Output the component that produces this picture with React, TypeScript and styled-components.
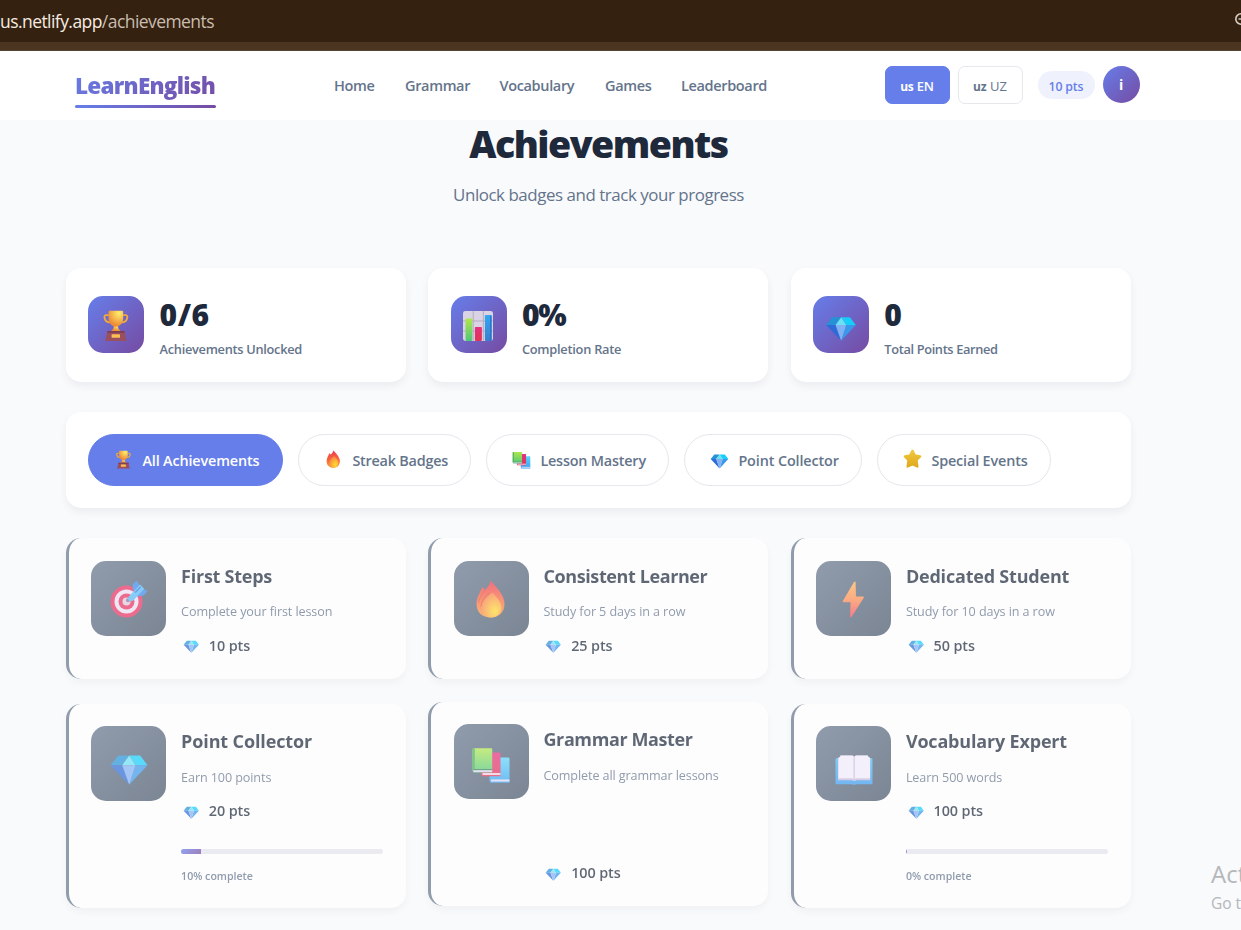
import React from "react";
import styled, { createGlobalStyle, css } from "styled-components";

const GlobalStyle = createGlobalStyle`
  * { box-sizing: border-box; }
  body {
    margin: 0;
    background: #f9fafc;
    font-family: "Segoe UI", "Open Sans", "Noto Sans", sans-serif;
    overflow: hidden;
  }
  h1, h3, p { margin: 0; }
  button { font-family: inherit; }
`;

const brand = "linear-gradient(135deg, #667eea, #764ba2)";

type Track = { $track?: number };
const tracking = css<Track>`
  letter-spacing: ${(p) => p.$track ?? 0}px;
  white-space: nowrap;
`;

const Page = styled.div`
  position: relative;
  width: 1241px;
  height: 930px;
  overflow: hidden;
  background: #f9fafc;
`;

const BrowserBar = styled.div`
  height: 51px;
  display: flex;
  align-items: flex-start;
  justify-content: space-between;
  background: #34210f;
  border-bottom: 1px solid #544535;
  box-shadow: inset 0 -8px 0 #4b3521;
`;

const Url = styled.div<Track>`
  ${tracking}
  font-size: 17.5px;
  line-height: 43px;
  color: #f6ece2;
  span { color: #c9bdb0; }
`;

const ZoomGlyph = styled.svg`
  width: 7px;
  height: 16px;
  margin-top: 11px;
`;

const Header = styled.header`
  height: 69px;
  padding: 0 101px 0 75px;
  display: flex;
  align-items: center;
  background: #fff;
`;

const Logo = styled.div<Track>`
  ${tracking}
  position: relative;
  width: 141px;
  height: 45px;
  font-size: 22.5px;
  font-weight: 800;
  line-height: 45px;
  color: transparent;
  background: ${brand};
  background-clip: text;
  -webkit-background-clip: text;
  &::after {
    content: "";
    position: absolute;
    left: 0;
    right: 0;
    bottom: 0;
    height: 3px;
    border-radius: 2px;
    background: ${brand};
  }
`;

const Nav = styled.nav`
  display: flex;
  gap: 30px;
  margin-left: 118px;
`;

const NavLink = styled.a<Track & { $width: number }>`
  ${tracking}
  width: ${(p) => p.$width}px;
  font-size: 14.5px;
  font-weight: 600;
  line-height: 22px;
  color: #64748b;
`;

const HeaderTools = styled.div`
  display: flex;
  align-items: center;
  margin: -2px 0 0 auto;
`;

const LangButton = styled.button<Track & { $active?: boolean }>`
  ${tracking}
  width: 65px;
  height: 38px;
  margin-right: 8px;
  padding: 3px 0 0;
  border-radius: 7px;
  border: 1px solid ${(p) => (p.$active ? "#667eea" : "#e5e7eb")};
  background: ${(p) => (p.$active ? "#667eea" : "#fff")};
  color: ${(p) => (p.$active ? "#fff" : "#64748b")};
  font-size: 13px;
  font-weight: ${(p) => (p.$active ? 600 : 500)};
  b { font-size: 12px; font-weight: 700; }
`;

const PointsPill = styled.div<Track>`
  ${tracking}
  width: 57px;
  height: 28px;
  margin: 0 8px 0 7px;
  border-radius: 14px;
  background: #eff2fd;
  color: #667eea;
  font-size: 12.3px;
  font-weight: 600;
  line-height: 31px;
  text-align: center;
`;

const Avatar = styled.div`
  width: 37.5px;
  height: 37.5px;
  border-radius: 50%;
  background: ${brand};
  color: #fff;
  font-size: 14px;
  font-weight: 700;
  line-height: 38px;
  text-align: center;
`;

const Main = styled.main`
  width: 1065px;
  margin-left: 66px;
`;

const Intro = styled.section`
  height: 148px;
  text-align: center;
`;

const PageTitle = styled.h1<Track>`
  ${tracking}
  font-size: 37.5px;
  font-weight: 800;
  line-height: 48px;
  color: #1e293b;
`;

const Subtitle = styled.p<Track>`
  ${tracking}
  margin-top: 14px;
  font-size: 16.9px;
  line-height: 26px;
  color: #64748b;
`;

const Grid = styled.section`
  display: grid;
  grid-template-columns: repeat(3, 340px);
  column-gap: 22.4px;
`;

const panel = css`
  border-radius: 15px;
  background: #fff;
  box-shadow: 0 4px 8px rgba(15, 23, 42, 0.06);
`;

const StatCard = styled.article`
  ${panel}
  height: 114px;
  padding: 28.4px 22px 0 22.2px;
  display: flex;
  gap: 15.2px;
`;

const IconTile = styled.div<{ $size: number; $muted?: boolean }>`
  flex: none;
  width: ${(p) => p.$size}px;
  height: ${(p) => p.$size}px;
  display: flex;
  align-items: center;
  justify-content: center;
  border-radius: 15px;
  background: ${(p) => (p.$muted ? "linear-gradient(135deg, #64748b, #475569)" : brand)};
`;

const StatValue = styled.div<Track>`
  ${tracking}
  font-size: 30px;
  font-weight: 800;
  line-height: 38px;
  color: #1e293b;
`;

const StatLabel = styled.div<Track>`
  ${tracking}
  margin-top: 4.600px;
  font-size: 12.8px;
  font-weight: 600;
  line-height: 20px;
  color: #64748b;
`;

const Filters = styled.section`
  ${panel}
  height: 96px;
  margin: 30px 0 30.3px;
  padding: 22px;
  display: flex;
  gap: 15px;
`;

const FilterButton = styled.button<Track & { $active?: boolean; $width: number }>`
  ${tracking}
  width: ${(p) => p.$width}px;
  height: 52px;
  padding: 1px 0 0 24.8px;
  display: flex;
  align-items: center;
  gap: 9.6px;
  border-radius: 26px;
  border: 1px solid ${(p) => (p.$active ? "#667eea" : "#e6e7ec")};
  background: ${(p) => (p.$active ? "#667eea" : "#fff")};
  color: ${(p) => (p.$active ? "#fff" : "#64748b")};
  font-size: 14.4px;
  font-weight: 600;
  svg { margin-top: -4px; }
`;

const BadgeCard = styled.article<{ $height: number; $raised?: boolean }>`
  ${panel}
  height: ${(p) => p.$height}px;
  margin-top: ${(p) => (p.$raised ? -2 : 0)}px;
  margin-bottom: 24.7px;
  padding: 22.5px 23px 22.5px 22.3px;
  display: flex;
  gap: 14.8px;
  border-left: 3px solid #64748b;
  opacity: 0.7;
`;

const BadgeBody = styled.div`
  flex: 1;
  display: flex;
  flex-direction: column;
`;

const BadgeTitle = styled.h3<Track>`
  ${tracking}
  font-size: 18px;
  font-weight: 700;
  line-height: 30px;
  color: #1e293b;
`;

const BadgeText = styled.p<Track>`
  ${tracking}
  margin-top: 11.6px;
  font-size: 12.6px;
  line-height: 20px;
  color: #64748b;
`;

const Reward = styled.div<Track & { $bottom?: boolean }>`
  ${tracking}
  margin-top: ${(p) => (p.$bottom ? "auto" : "11.2px")};
  margin-bottom: ${(p) => (p.$bottom ? "-2px" : "0")};
  height: 24px;
  padding-left: 2px;
  display: flex;
  align-items: center;
  gap: 9.2px;
  font-size: 14.4px;
  font-weight: 600;
  line-height: 24px;
  color: #1e293b;
  svg { margin-top: -2px; }
`;

const ProgressTrack = styled.div`
  flex: none;
  height: 5px;
  margin-top: 26px;
  border-radius: 3px;
  background: #e5e5eb;
  overflow: hidden;
`;

const ProgressFill = styled.div`
  height: 100%;
  background: ${brand};
`;

const ProgressLabel = styled.div<Track>`
  ${tracking}
  margin-top: 13px;
  font-size: 10.6px;
  font-weight: 600;
  line-height: 18px;
  color: #64748b;
`;

const Watermark = styled.aside`
  position: absolute;
  left: 1211px;
  top: 856.500px;
  white-space: nowrap;
  color: #b5b7ba;
  font-size: 15.5px;
  line-height: 24px;
  strong { display: block; font-weight: 400; font-size: 24px; line-height: 34px; }
`;

const EmojiSvg = styled.svg<{ $size: number }>`
  flex: none;
  width: ${(p) => p.$size}px;
  height: ${(p) => p.$size}px;
  overflow: visible;
`;

type EmojiName = "trophy" | "chart" | "gem" | "flame" | "books" | "star" | "target" | "bolt" | "openBook";

const art: Record<EmojiName, React.ReactNode> = {
  trophy: (
    <>
      <path d="M11 9H7.500a2 2 0 0 0-2 2.300c.5 4.200 3 6.500 7 6.700M29 9h3.200a2 2 0 0 1 2 2.300c-.5 4.200-3 6.500-7 6.700" fill="none" stroke="#f0a93c" strokeWidth="2.300" />
      <path d="M17.500 21h4.800l.6 4.500 3 3.500H13.800l3-3.500z" fill="url(#gCup)" />
      <path d="M10.700 4.800q0-1.300 1.300-1.300h15.700q1.300 0 1.300 1.300v8.700c0 5-4.300 10-9.200 10s-9.100-5-9.100-10z" fill="url(#gCup)" />
      <path d="M9.500 28.800h21l2.600 12.300H6.500z" fill="#9a4f5e" />
      <path d="M9.500 28.800h21l.5 2.200H9z" fill="#7c3d50" />
      <rect x="14.500" y="32.800" width="10.500" height="4.400" rx=".6" fill="#f9bf54" />
    </>
  ),
  chart: (
    <>
      <rect x="0" y="3.600" width="37.500" height="37.500" rx="3" fill="#d9d3e3" />
      <path d="M12.800 3.600v37.500M25.500 3.600v37.500M0 16.200h37.500M0 28.800h37.500" stroke="#b3a9c0" strokeWidth="1.200" />
      <rect x="3.200" y="13.200" width="8.400" height="27.900" rx="1" fill="url(#gGreen)" />
      <rect x="14.900" y="23.600" width="8.700" height="17.500" rx="1" fill="url(#gRed)" />
      <rect x="27.400" y="8.600" width="8.400" height="32.500" rx="1" fill="url(#gBlue)" />
      <path d="M34.800 9.600v31.500" stroke="#2a70c0" strokeWidth="1.600" />
    </>
  ),
  gem: (
    <>
      <path d="M9.200 11.500h11L13.200 21.200H1.500z" fill="#2592d6" />
      <path d="M20.200 11.500h11l7.300 9.700h-12z" fill="#17cdfa" />
      <path d="M20.200 11.500l6.300 9.700H13.200z" fill="#6ce0f5" />
      <path d="M1.500 21.200h11.700l7 19.600z" fill="#2f6bd6" />
      <path d="M38.500 21.200h-12l-6.300 19.600z" fill="#3a98ea" />
      <path d="M13.200 21.200h13.300l-6.300 19.600z" fill="#7fb1f4" />
    </>
  ),
  flame: (
    <>
      <path d="M20.200 2.500c1.800 3.600 4.800 5.800 7.500 9.400 3.300 4.300 5.800 8.700 5.800 14.100 0 8-5.500 13.500-13.500 13.500-8.600 0-14.500-5.300-14.500-13.300 0-6.700 3-10.200 5.700-17 1.300.6 2.300 1.500 2.900 2.700 2.400-2.300 4.800-5.500 6.100-9.400z" fill="url(#gFlame)" />
      <path d="M13.800 12c-3.300 4.600-6 8-6.200 13M18 15c-4.600 4-7.800 8-8 14" fill="none" stroke="#d94a30" strokeWidth="1.200" opacity=".6" />
      <path d="M21.500 14.500C15 19 10.500 24.500 10.500 30.500c0 5 4 9 9.500 9 6 0 10.300-4.500 10.300-10.500 0-5.500-4.800-9.500-8.800-14.500z" fill="url(#gFlameIn)" />
    </>
  ),
  books: (
    <>
      <path d="M20.500 15.500h16.700q1.300 0 1.300 1.300v24H20q-1.500 0-1.500-2v-21z" fill="url(#gBlueBook)" />
      <path d="M20 37.500h18.500v2H20z" fill="#e6d8f5" />
      <path d="M12 10.500h16.300q1.200 0 1.200 1.200v22.500H11.700q-1.500 0-1.500-2v-19z" fill="url(#gRed)" />
      <path d="M11.500 31h18v2h-18z" fill="#f3cfe2" />
      <path d="M1.500 7.700q0-1.500 1.500-1.500h17q1.200 0 1.200 1.200v23.100H3q-1.500 0-1.500-2z" fill="url(#gGreen)" />
      <path d="M1.500 7.700q0-1.500 1.500-1.500h.8v21.500H1.500z" fill="#4aae5c" />
      <path d="M2.500 27.700h18.700" stroke="#386a57" strokeWidth="1" />
      <path d="M2.500 28.200h18.700v1.900H2.500z" fill="#ddd1ee" />
    </>
  ),
  star: (
    <path d="M17.800 2.600q2.200-3.600 4.400 0l4.600 9.200 9.700 1.600q3.900.8 1.300 3.800l-6.800 7.200 1.600 12q.4 4-3.100 2.600L20 34.800 10.500 39q-3.600 1.400-3.100-2.600l1.600-12-6.800-7.200q-2.600-3 1.300-3.800l9.700-1.600z" fill="url(#gStar)" />
  ),
  target: (
    <>
      <circle cx="17.500" cy="23.500" r="16" fill="#e8315f" />
      <circle cx="17.500" cy="23.500" r="12" fill="#ebdff2" />
      <circle cx="17.500" cy="23.500" r="8" fill="#e8315f" />
      <circle cx="17.500" cy="23.500" r="4" fill="#ddc9dc" />
      <circle cx="19" cy="22.200" r="2" fill="#8d7194" />
      <path d="M23.800 11.500l-.2-5 4-4 3.600 5.500-4.500 9zM27.500 18.500l4.500-8.700 6.700 3.400-4.700 4.500z" fill="#3c86e8" />
      <path d="M19.800 18.500L31 6.500l4.200 4.200L24.500 22.300q-2.600 1.500-4.400.4t-.3-4.200z" fill="#55b9f5" />
      <path d="M26.200 14.500l5.500-5.800" stroke="#2f78dc" strokeWidth="1.300" />
    </>
  ),
  bolt: (
    <path d="M20 4q1.200-1.300 1.600.2l.4 14.300h7.200q1 .2.600 1.200L17.600 38.800q-1 1.300-1.500 0l.4-14.600H9.300q-1-.2-.5-1.200z" fill="url(#gBolt)" />
  ),
  openBook: (
    <>
      <path d="M1.500 15.500q0-1.500 1.500-1.500h34q1.500 0 1.500 1.500v23.700q0 1-1 1H22.300q-2 1.200-4.300 0H2.500q-1 0-1-1z" fill="url(#gCover)" />
      <path d="M4 14q2-1 2.500-2.500H18q1.500 0 2 1.500.6-1.500 2.200-1.500h11.500q.5 1.500 2.600 2.500v22.300H22.500q-2.300 1.500-4.700 0H4z" fill="#c8bbdc" />
      <path d="M4.500 14q2-1 2.300-2.500H18q2 0 2 2V35q-1.500-.8-3-.8H4.500zM20.300 13.500q0-2 2-2h11.400q.5 1.500 2.300 2.500v20.200H23q-1.500 0-2.700.8z" fill="#f1ebfb" />
      <path d="M20.100 13v22" stroke="#cbbfe0" strokeWidth="1.300" />
    </>
  ),
};

const Emoji = ({ name, size }: { name: EmojiName; size: number }) => (
  <EmojiSvg $size={size} viewBox="0 0 40 40" aria-hidden="true">
    {art[name]}
  </EmojiSvg>
);

const HiddenDefs = styled.svg`
  position: absolute;
  width: 0;
  height: 0;
`;

const gradients: [string, string, string, string?][] = [
  ["gGreen", "#b0e64c", "#4fc878"],
  ["gRed", "#e4307f", "#e23553"],
  ["gBlue", "#32a8f4", "#3a7fd0"],
  ["gBlueBook", "#5ed5fa", "#38a0f0"],
  ["gBolt", "#ffb254", "#f4475a", "#fb8b50"],
  ["gStar", "#f0c93e", "#e0a81c"],
  ["gFlame", "#f0334c", "#fb9a3c", "#f8673e"],
  ["gCover", "#4ab8ee", "#3a9af0"],
];

const Gradients = () => (
  <HiddenDefs>
    <defs>
      {gradients.map(([id, from, to, mid]) => (
        <linearGradient key={id} id={id} x1="0" y1="0" x2="0" y2="1">
          <stop stopColor={from} />
          {mid && <stop offset=".5" stopColor={mid} />}
          <stop offset="1" stopColor={to} />
        </linearGradient>
      ))}
      <radialGradient id="gCup" cx=".7" cy=".15" r=".8">
        <stop stopColor="#fff06a" />
        <stop offset="1" stopColor="#ee8a35" />
      </radialGradient>
      <radialGradient id="gFlameIn" cx=".68" cy=".75" r=".75">
        <stop stopColor="#ffdc30" />
        <stop offset=".5" stopColor="#fdae3a" />
        <stop offset="1" stopColor="#f77d48" />
      </radialGradient>
    </defs>
  </HiddenDefs>
);

const links = [
  { label: "Home", width: 41 },
  { label: "Grammar", width: 64.5 },
  { label: "Vocabulary", width: 75.5 },
  { label: "Games", width: 46 },
  { label: "Leaderboard", width: 86 },
];

const stats: { icon: EmojiName; value: string; label: string; valueTrack: number; labelTrack: number }[] = [
  { icon: "trophy", value: "0/6", label: "Achievements Unlocked", valueTrack: 0.6, labelTrack: -0.29 },
  { icon: "chart", value: "0%", label: "Completion Rate", valueTrack: -1.2, labelTrack: -0.25 },
  { icon: "gem", value: "0", label: "Total Points Earned", valueTrack: 0, labelTrack: -0.35 },
];

const filters: { icon: EmojiName; label: string; width: number; track: number; active?: boolean }[] = [
  { icon: "trophy", label: "All Achievements", width: 195, track: -0.14, active: true },
  { icon: "flame", label: "Streak Badges", width: 173, track: -0.22 },
  { icon: "books", label: "Lesson Mastery", width: 183, track: -0.2 },
  { icon: "gem", label: "Point Collector", width: 178, track: -0.12 },
  { icon: "star", label: "Special Events", width: 174, track: -0.15 },
];

type Badge = {
  icon: EmojiName;
  title: string;
  titleTrack: number;
  text: string;
  points: number;
  height: number;
  progress?: number;
  raised?: boolean;
};

const badges: Badge[] = [
  { icon: "target", title: "First Steps", titleTrack: -0.25, text: "Complete your first lesson", points: 10, height: 140.6 },
  { icon: "flame", title: "Consistent Learner", titleTrack: -0.4, text: "Study for 5 days in a row", points: 25, height: 140.6 },
  { icon: "bolt", title: "Dedicated Student", titleTrack: -0.2, text: "Study for 10 days in a row", points: 50, height: 140.6 },
  { icon: "gem", title: "Point Collector", titleTrack: -0.13, text: "Earn 100 points", points: 20, height: 204, progress: 10 },
  { icon: "books", title: "Grammar Master", titleTrack: -0.4, text: "Complete all grammar lessons", points: 100, height: 204, raised: true },
  { icon: "openBook", title: "Vocabulary Expert", titleTrack: -0.18, text: "Learn 500 words", points: 100, height: 204, progress: 0 },
];

export default function App() {
  return (
    <Page>
      <GlobalStyle />
      <Gradients />
      <BrowserBar>
        <Url $track={-0.56}>
          us.netlify.app<span>/achievements</span>
        </Url>
        <ZoomGlyph viewBox="0 0 7 16">
          <circle cx="7" cy="8" r="5.200" fill="none" stroke="#d8cec4" strokeWidth="1.600" />
          <path d="M4.500 8H9" stroke="#d8cec4" strokeWidth="1.400" />
        </ZoomGlyph>
      </BrowserBar>
      <Header>
        <Logo $track={-0.75}>LearnEnglish</Logo>
        <Nav>
          {links.map((l) => (
            <NavLink key={l.label} $width={l.width} $track={-0.35}>
              {l.label}
            </NavLink>
          ))}
        </Nav>
        <HeaderTools>
          <LangButton $active $track={-0.2}>
            <b>us</b> EN
          </LangButton>
          <LangButton>
            <b>uz</b> UZ
          </LangButton>
          <PointsPill $track={-0.15}>10 pts</PointsPill>
          <Avatar>i</Avatar>
        </HeaderTools>
      </Header>
      <Main>
        <Intro>
          <PageTitle $track={-1.5}>Achievements</PageTitle>
          <Subtitle $track={-0.44}>Unlock badges and track your progress</Subtitle>
        </Intro>
        <Grid>
          {stats.map((s) => (
            <StatCard key={s.label}>
              <IconTile $size={56.2}>
                <Emoji name={s.icon} size={32} />
              </IconTile>
              <div>
                <StatValue $track={s.valueTrack}>{s.value}</StatValue>
                <StatLabel $track={s.labelTrack}>{s.label}</StatLabel>
              </div>
            </StatCard>
          ))}
        </Grid>
        <Filters>
          {filters.map((f) => (
            <FilterButton key={f.label} $width={f.width} $active={f.active} $track={f.track}>
              <Emoji name={f.icon} size={19} />
              {f.label}
            </FilterButton>
          ))}
        </Filters>
        <Grid>
          {badges.map((b) => (
            <BadgeCard key={b.title} $height={b.height} $raised={b.raised}>
              <IconTile $size={75} $muted>
                <Emoji name={b.icon} size={40} />
              </IconTile>
              <BadgeBody>
                <BadgeTitle $track={b.titleTrack}>{b.title}</BadgeTitle>
                <BadgeText $track={-0.1}>{b.text}</BadgeText>
                <Reward $bottom={b.raised} $track={-0.1}>
                  <Emoji name="gem" size={16.5} />
                  {b.points} pts
                </Reward>
                {b.progress !== undefined && (
                  <>
                    <ProgressTrack>
                      <ProgressFill style={{ width: `${Math.max(b.progress, 0.4)}%` }} />
                    </ProgressTrack>
                    <ProgressLabel>{b.progress}% complete</ProgressLabel>
                  </>
                )}
              </BadgeBody>
            </BadgeCard>
          ))}
        </Grid>
      </Main>
      <Watermark>
        <strong>Activate Windows</strong>
        Go to Settings to activate Windows.
      </Watermark>
    </Page>
  );
}
